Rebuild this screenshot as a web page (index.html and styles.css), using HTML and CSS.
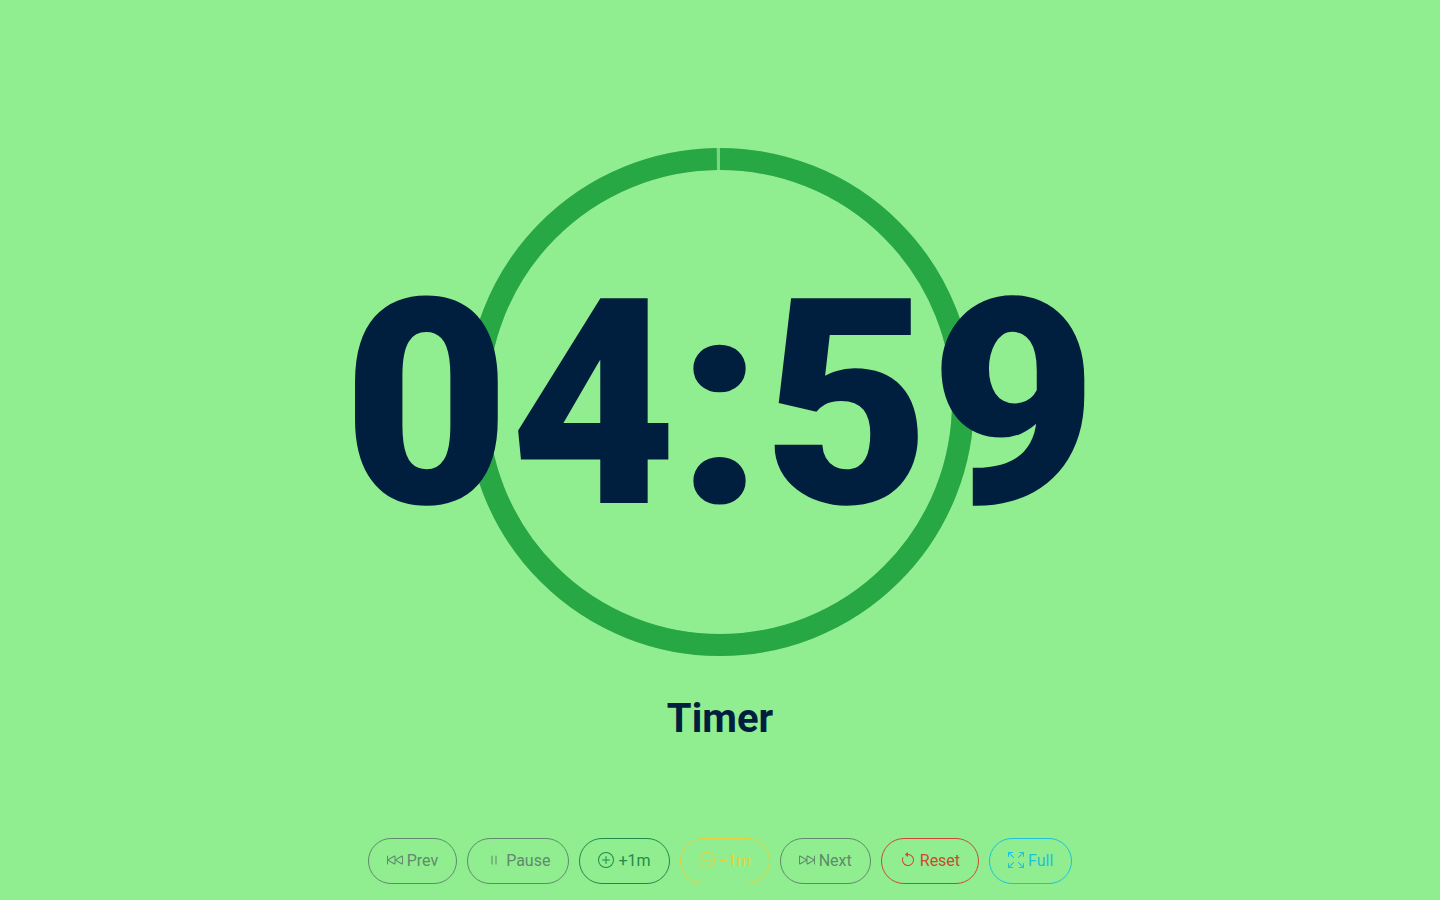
FILE: index.html
```html
<!DOCTYPE html>
<html lang="en">
<head>
<meta charset="utf-8">
<title>Timer</title>
<link rel="stylesheet" href="styles.css">
</head>
<body>
<main class="stage">
  <div class="dial">
    <svg class="ring" viewBox="0 0 508 508" width="508" height="508" aria-hidden="true">
      <circle class="ring-track" cx="254" cy="254" r="243"></circle>
      <circle class="ring-bar" cx="254" cy="254" r="243"></circle>
    </svg>
    <div class="time">04:59</div>
  </div>
  <div class="label">Timer</div>
</main>
<nav class="controls">
  <button class="btn btn-gray"><svg class="ico" viewBox="0 0 16 16"><path d="M.5 3.5A.5.5 0 0 1 1 4v3.248l6.267-3.636c.52-.302 1.233.043 1.233.696v2.94l6.267-3.636c.52-.302 1.233.043 1.233.696v7.384c0 .653-.713.998-1.233.696L8.5 8.752v2.94c0 .653-.713.998-1.233.696L1 8.752V12a.5.5 0 0 1-1 0V4a.5.5 0 0 1 .5-.5m7 1.133L1.696 8 7.5 11.367zm7.5 0L9.196 8 15 11.367z"/></svg><span>Prev</span></button>
  <button class="btn btn-gray"><svg class="ico" viewBox="0 0 16 16"><path d="M6 3.5a.5.5 0 0 1 .5.5v8a.5.5 0 0 1-1 0V4a.5.5 0 0 1 .5-.5m4 0a.5.5 0 0 1 .5.5v8a.5.5 0 0 1-1 0V4a.5.5 0 0 1 .5-.5"/></svg><span>Pause</span></button>
  <button class="btn btn-green"><svg class="ico" viewBox="0 0 16 16"><path d="M8 15A7 7 0 1 1 8 1a7 7 0 0 1 0 14m0 1A8 8 0 1 0 8 0a8 8 0 0 0 0 16"/><path d="M8 4a.5.5 0 0 1 .5.5v3h3a.5.5 0 0 1 0 1h-3v3a.5.5 0 0 1-1 0v-3h-3a.5.5 0 0 1 0-1h3v-3A.5.5 0 0 1 8 4"/></svg><span>+1m</span></button>
  <button class="btn btn-yellow"><svg class="ico" viewBox="0 0 16 16"><path d="M8 15A7 7 0 1 1 8 1a7 7 0 0 1 0 14m0 1A8 8 0 1 0 8 0a8 8 0 0 0 0 16"/><path d="M4 8a.5.5 0 0 1 .5-.5h7a.5.5 0 0 1 0 1h-7A.5.5 0 0 1 4 8"/></svg><span>−1m</span></button>
  <button class="btn btn-gray"><svg class="ico" viewBox="0 0 16 16"><path d="M15.5 3.5a.5.5 0 0 1 .5.5v8a.5.5 0 0 1-1 0V8.752l-6.267 3.636c-.52.302-1.233-.043-1.233-.696v-2.94l-6.267 3.636C.713 12.69 0 12.345 0 11.692V4.308c0-.653.713-.998 1.233-.696L7.5 7.248v-2.94c0-.653.713-.998 1.233-.696L15 7.248V4a.5.5 0 0 1 .5-.5M1 4.633v6.734L6.804 8zm7.5 0v6.734L14.304 8z"/></svg><span>Next</span></button>
  <button class="btn btn-red"><svg class="ico" viewBox="0 0 16 16"><path d="M8 3a5 5 0 1 1-4.546 2.914.5.5 0 0 0-.908-.417A6 6 0 1 0 8 2z"/><path d="M8 4.466V.534a.25.25 0 0 0-.41-.192L5.23 2.308a.25.25 0 0 0 0 .384l2.36 1.966A.25.25 0 0 0 8 4.466"/></svg><span>Reset</span></button>
  <button class="btn btn-cyan"><svg class="ico" viewBox="0 0 16 16"><path d="M5.828 10.172a.5.5 0 0 0-.707 0l-4.096 4.096V11.5a.5.5 0 0 0-1 0v3.975a.5.5 0 0 0 .5.5H4.5a.5.5 0 0 0 0-1H1.732l4.096-4.096a.5.5 0 0 0 0-.707m4.344 0a.5.5 0 0 1 .707 0l4.096 4.096V11.5a.5.5 0 1 1 1 0v3.975a.5.5 0 0 1-.5.5H11.5a.5.5 0 0 1 0-1h2.768l-4.096-4.096a.5.5 0 0 1 0-.707m0-4.344a.5.5 0 0 0 .707 0l4.096-4.096V4.5a.5.5 0 1 0 1 0V.525a.5.5 0 0 0-.5-.5H11.5a.5.5 0 0 0 0 1h2.768l-4.096 4.096a.5.5 0 0 0 0 .707m-4.344 0a.5.5 0 0 1-.707 0L1.025 1.732V4.5a.5.5 0 0 1-1 0V.525a.5.5 0 0 1 .5-.5H4.5a.5.5 0 0 1 0 1H1.732l4.096 4.096a.5.5 0 0 1 0 .707"/></svg><span>Full</span></button>
</nav>
</body>
</html>
```

FILE: styles.css
```css
* { box-sizing: border-box; }
html, body { height: 100%; }
body {
  margin: 0;
  background: #90ee90;
  font-family: Roboto, "Liberation Sans", sans-serif;
  display: flex;
  flex-direction: column;
  align-items: center;
  overflow: hidden;
}
.stage {
  flex: 1;
  display: flex;
  flex-direction: column;
  align-items: center;
  padding-top: 148px;
}
.dial {
  position: relative;
  width: 508px;
  height: 508px;
  display: flex;
  align-items: center;
  justify-content: center;
}
.ring {
  position: absolute;
  inset: 0;
  transform: rotate(-90deg);
}
.ring-track, .ring-bar { fill: none; stroke-width: 22; }
.ring-track { stroke: #7ad67f; }
.ring-bar {
  stroke: #28a745;
  stroke-dasharray: 1523 1526.8;
}
.time {
  position: relative;
  margin-top: 6px;
  font-size: 288px;
  font-weight: 900;
  line-height: 1;
  color: #001f3f;
  white-space: nowrap;
}
.label {
  margin-top: 39px;
  font-size: 40px;
  font-weight: 700;
  line-height: 48px;
  color: #001f3f;
}
.controls {
  display: flex;
  gap: 10px;
  padding-bottom: 16px;
}
.btn {
  height: 46px;
  padding: 0 18px 1px;
  display: flex;
  align-items: center;
  gap: 4px;
  background: transparent;
  border: 1px solid;
  border-radius: 23px;
  font: 400 16px Roboto, "Liberation Sans", sans-serif;
}
.ico {
  width: 16px;
  height: 16px;
  margin-bottom: 1px;
  fill: currentColor;
}
.btn-gray { color: #5f8a6c; }
.btn-green { color: #1f8a4a; }
.btn-yellow { color: #e8cf3a; }
.btn-red { color: #cf4733; }
.btn-cyan { color: #1fc0dc; }
```
